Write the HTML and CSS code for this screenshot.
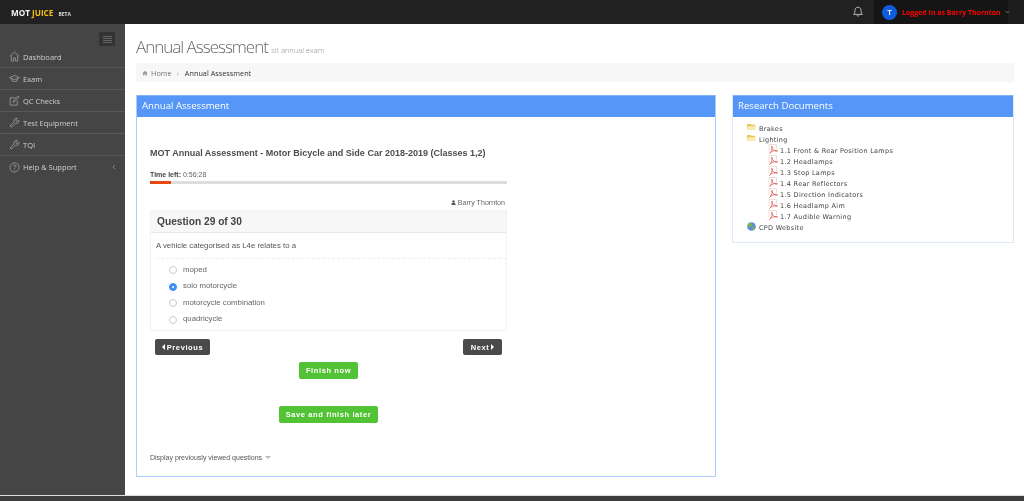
FILE: index.html
```html
<!DOCTYPE html>
<html lang="en">
<head>
<meta charset="utf-8">
<title>Annual Assessment</title>
<link rel="stylesheet" href="styles.css">
</head>
<body>
<header class="topbar">
  <div class="logo"><span class="logo-mot">MOT</span><span class="logo-juice">JUICE</span><span class="logo-beta">BETA</span></div>
  <svg class="bell" viewBox="0 0 12 12"><path d="M6 1.2c-2 0-3 1.500-3 3.200 0 2.600-1 3.400-1.400 4h8.800c-.4-.6-1.400-1.400-1.400-4 0-1.700-1-3.200-3-3.200zM5 9.500c.2.900 1.800.9 2 0"/></svg>
  <div class="user">
    <span class="avatar">T</span>
    <span class="user-name">Logged In as Barry Thornton</span>
    <svg class="user-caret" viewBox="0 0 6 4"><path d="M1 1l2 2 2-2"/></svg>
  </div>
</header>
<div class="layout">
  <aside class="sidebar">
    <div class="toggle-row"><div class="toggle"><i></i><i></i><i></i><i></i></div></div>
    <nav>
      <a class="nav-item"><svg viewBox="0 0 12 12"><path d="M.8 6L6 1.200 11.200 6M2.500 5v6h2.500V7.500h2V11h2.500V5"/></svg>Dashboard</a>
      <a class="nav-item"><svg viewBox="0 0 12 12"><path d="M.5 5L6 2.800 11.500 5 6 7.200zM3 6.200v2.300c1.500 1.100 4.500 1.100 6 0V6.200"/></svg>Exam</a>
      <a class="nav-item"><svg viewBox="0 0 12 12"><path d="M9 6.500V11H1.200V3H7M4.500 8l.4-1.800L10 1.200l1 1.300-5 5z"/></svg>QC Checks</a>
      <a class="nav-item"><svg viewBox="0 0 12 12"><path d="M1 9.800L5.500 5.300C4.800 3 6.800 1 9 1.500L7.500 3.200l.4 1.300 1.300.4 1.600-1.500c.5 2.300-1.500 4.200-3.700 3.500L2.300 11.100z"/></svg>Test Equipment</a>
      <a class="nav-item"><svg viewBox="0 0 12 12"><path d="M1 9.800L5.500 5.300C4.800 3 6.800 1 9 1.500L7.500 3.200l.4 1.300 1.300.4 1.600-1.500c.5 2.300-1.500 4.200-3.700 3.500L2.300 11.100z"/></svg>TQI</a>
      <a class="nav-item nav-last"><svg viewBox="0 0 12 12"><circle cx="6" cy="6" r="5"/><path d="M4.400 4.800C4.500 3 7.600 3 7.600 4.700 7.600 5.800 6 5.800 6 7.200M6 8.200v1"/></svg>Help &amp; Support<svg class="nav-caret" viewBox="0 0 4 6"><path d="M3 1L1 3l2 2"/></svg></a>
    </nav>
  </aside>
  <main class="main">
    <h1 class="page-title">Annual Assessment <small>sit annual exam</small></h1>
    <div class="breadcrumb">
      <svg class="crumb-home" viewBox="0 0 12 12"><path d="M6 1.500L.5 6.500h1.700V11h2.800V7.800h2V11h2.800V6.500h1.700z"/></svg>
      <span class="crumb-link">Home</span><span class="crumb-sep">›</span><span class="crumb-here">Annual Assessment</span>
    </div>
    <div class="columns">
      <section class="panel panel-exam">
        <h2 class="panel-head">Annual Assessment</h2>
        <div class="exam-body">
          <h3 class="exam-title">MOT Annual Assessment - Motor Bicycle and Side Car 2018-2019 (Classes 1,2)</h3>
          <div class="timer"><b>Time left:</b> 0:56:28</div>
          <div class="progress"><div class="progress-fill" style="width:6%"></div></div>
          <div class="candidate"><svg viewBox="0 0 10 10"><circle cx="5" cy="3" r="2.400"/><path d="M.8 10c0-3 1-4.500 4.200-4.500S9.200 7 9.200 10z"/></svg>Barry Thornton</div>
          <div class="question">
            <div class="question-head">Question 29 of 30</div>
            <p class="question-text">A vehicle categorised as L4e relates to a</p>
            <ul class="options">
              <li><span class="radio"></span>moped</li>
              <li><span class="radio radio-on"></span>solo motorcycle</li>
              <li><span class="radio"></span>motorcycle combination</li>
              <li><span class="radio"></span>quadricycle</li>
            </ul>
          </div>
          <div class="pager">
            <a class="btn btn-dark"><span class="tri tri-left"></span>Previous</a>
            <a class="btn btn-dark">Next<span class="tri tri-right"></span></a>
          </div>
          <div class="finish finish-now"><a class="btn btn-green btn-now">Finish now</a></div>
          <div class="finish finish-later"><a class="btn btn-green btn-later">Save and finish later</a></div>
          <div class="previous-toggle">Display previously viewed questions<span class="tri-down"></span></div>
        </div>
      </section>
      <section class="panel panel-docs">
        <h2 class="panel-head">Research Documents</h2>
        <ul class="tree">
          <li><svg class="ti" viewBox="0 0 10 10"><path fill="#e8c65a" d="M0 1h4l1 1h4v5.500H0z"/><path fill="#fbeeb0" d="M1 3.500h9l-1 4H0z"/></svg>Brakes</li>
          <li><svg class="ti" viewBox="0 0 10 10"><path fill="#e8c65a" d="M0 1h4l1 1h4v5.500H0z"/><path fill="#fbeeb0" d="M1 3.500h9l-1 4H0z"/></svg>Lighting</li>
          <li class="leaf"><svg class="ti ti-pdf" viewBox="0 0 10 10"><path class="pdf" d="M1.500 9.500c1-.5 3-4 2.800-6.500-.1-1.500-.9-1-.6.300C4 5 6.500 7.500 9 7.300c1-.1.600-1-.8-.9-2 .1-5 .9-6.700 3.100z"/><path class="pdf-page" d="M1 7V.5h7.500V5"/></svg>1.1 Front &amp; Rear Position Lamps</li>
          <li class="leaf"><svg class="ti ti-pdf" viewBox="0 0 10 10"><path class="pdf" d="M1.500 9.500c1-.5 3-4 2.800-6.500-.1-1.500-.9-1-.6.300C4 5 6.500 7.500 9 7.300c1-.1.600-1-.8-.9-2 .1-5 .9-6.700 3.100z"/><path class="pdf-page" d="M1 7V.5h7.500V5"/></svg>1.2 Headlamps</li>
          <li class="leaf"><svg class="ti ti-pdf" viewBox="0 0 10 10"><path class="pdf" d="M1.500 9.500c1-.5 3-4 2.800-6.500-.1-1.500-.9-1-.6.300C4 5 6.500 7.500 9 7.300c1-.1.600-1-.8-.9-2 .1-5 .9-6.700 3.100z"/><path class="pdf-page" d="M1 7V.5h7.500V5"/></svg>1.3 Stop Lamps</li>
          <li class="leaf"><svg class="ti ti-pdf" viewBox="0 0 10 10"><path class="pdf" d="M1.500 9.500c1-.5 3-4 2.800-6.500-.1-1.500-.9-1-.6.300C4 5 6.500 7.500 9 7.300c1-.1.600-1-.8-.9-2 .1-5 .9-6.700 3.100z"/><path class="pdf-page" d="M1 7V.5h7.500V5"/></svg>1.4 Rear Reflectors</li>
          <li class="leaf"><svg class="ti ti-pdf" viewBox="0 0 10 10"><path class="pdf" d="M1.500 9.500c1-.5 3-4 2.800-6.500-.1-1.500-.9-1-.6.300C4 5 6.500 7.500 9 7.300c1-.1.600-1-.8-.9-2 .1-5 .9-6.700 3.100z"/><path class="pdf-page" d="M1 7V.5h7.500V5"/></svg>1.5 Direction Indicators</li>
          <li class="leaf"><svg class="ti ti-pdf" viewBox="0 0 10 10"><path class="pdf" d="M1.500 9.500c1-.5 3-4 2.800-6.500-.1-1.500-.9-1-.6.300C4 5 6.500 7.500 9 7.300c1-.1.600-1-.8-.9-2 .1-5 .9-6.700 3.100z"/><path class="pdf-page" d="M1 7V.5h7.500V5"/></svg>1.6 Headlamp Aim</li>
          <li class="leaf"><svg class="ti ti-pdf" viewBox="0 0 10 10"><path class="pdf" d="M1.500 9.500c1-.5 3-4 2.800-6.500-.1-1.500-.9-1-.6.300C4 5 6.500 7.500 9 7.300c1-.1.600-1-.8-.9-2 .1-5 .9-6.700 3.100z"/><path class="pdf-page" d="M1 7V.5h7.500V5"/></svg>1.7 Audible Warning</li>
          <li><svg class="ti" viewBox="0 0 10 10"><circle cx="5" cy="5" r="4.800" fill="#5c8fd6"/><path fill="#7db54a" d="M3 1.200c1.500-.6 3.500 0 3 1.600S3.500 4 3.200 5.500 1 5.500.6 4C.8 3 1.800 1.800 3 1.200zM6.500 6c1-.5 2.500-.3 2.800 0-.2 1.300-1.500 3-3 3.300C5.800 8.500 5.800 6.800 6.500 6z"/></svg>CPD Website</li>
        </ul>
      </section>
    </div>
  </main>
</div>
<footer class="footer"></footer>
</body>
</html>
```
FILE: styles.css
```css
* { box-sizing: border-box; }
html, body { margin: 0; height: 501px; overflow: hidden; }
body { background: #454545; font-family: "Liberation Sans", Arial, sans-serif; color: #444; display: flex; flex-direction: column; filter: blur(.3px); }
svg { display: block; flex: none; }

/* top bar */
.topbar { height: 24px; flex: none; display: flex; align-items: center; background: #212121; padding-left: 11px; }
.logo { display: flex; align-items: baseline; font-family: "Open Sans", sans-serif; font-weight: 700; font-size: 8.200px; margin-right: auto; }
.logo-mot { color: #f2f2f2; margin-right: 2px; }
.logo-juice { color: #f6bd16; }
.logo-beta { color: #ddd; font-size: 5px; margin-left: 5px; }
.bell { width: 12px; height: 12px; fill: none; stroke: #b5b5b5; stroke-width: 1; margin-right: 10px; }
.user { width: 150px; height: 24px; background: #151515; display: flex; align-items: center; padding-left: 8px; border-right: 16px solid #1d1d1d; }
.avatar { width: 15px; height: 15px; flex: none; border-radius: 50%; background: #0f5ce0; color: #fff; font-size: 7.500px; font-weight: 700; display: flex; align-items: center; justify-content: center; margin-right: 5px; }
.user-name { color: #f00; font-family: "Open Sans", sans-serif; font-size: 7px; font-weight: 700; white-space: nowrap; }
.user-caret { width: 5px; height: 4px; margin-left: 4px; fill: none; stroke: #888; stroke-width: 1; }

/* layout */
.layout { flex: 1; display: flex; min-height: 0; }
.sidebar { width: 125px; flex: none; background: #454545; }
.toggle-row { display: flex; justify-content: flex-end; padding: 8px 10px 0 0; height: 22px; }
.toggle { width: 16px; height: 14px; background: #333; display: flex; flex-direction: column; justify-content: center; align-items: center; gap: 1px; }
.toggle i { display: block; width: 9px; height: 1px; background: #666; }
.nav-item { height: 22px; display: flex; align-items: center; padding-left: 9px; color: #cfcfcf; font-family: "Open Sans", sans-serif; font-size: 7.500px; border-bottom: 1px solid #595959; }
.nav-last { border-bottom: 0; }
.nav-item > svg:first-child { width: 11px; height: 11px; margin-right: 3px; fill: none; stroke: #a9a9a9; stroke-width: .8; }
.nav-caret { width: 4px; height: 6px; margin-left: auto; margin-right: 9px; fill: none; stroke: #999; stroke-width: .7; }

/* main */
.main { flex: 1; min-width: 0; background: #fff; padding: 0 10px 0 11px; }
.page-title { margin: 13px 0 0; height: 26px; font-family: "Open Sans", sans-serif; font-weight: 300; font-size: 17px; line-height: 20px; color: #666; letter-spacing: -1px; white-space: nowrap; }
.page-title small { font-size: 7.500px; font-weight: 300; color: #888; letter-spacing: 0; }
.breadcrumb { height: 19px; background: #f7f7f7; display: flex; align-items: center; padding-left: 6px; font-family: "Open Sans", sans-serif; font-size: 7.300px; }
.crumb-home { width: 6px; height: 6px; fill: #999; margin-right: 3px; }
.crumb-link { color: #777; }
.crumb-sep { color: #999; margin: 0 6px 0 5px; }
.crumb-here { color: #333; }
.columns { display: grid; grid-template-columns: 580px 282px; gap: 16px; margin-top: 13px; align-items: start; }
.panel { border: 1px solid #abcdfb; border-top: 0; background: #fff; }
.panel-head { margin: 0; height: 22px; background: #5596f6; color: #fff; border-top: 1px solid #84b2f8; font-family: "Open Sans", sans-serif; font-weight: 400; font-size: 9.600px; line-height: 20px; padding-left: 5px; }
.panel-exam { height: 382px; }
.panel-docs { height: 148px; border-color: #dbe8fd; }

/* exam */
.exam-body { padding: 0 9px 0 13px; }
.exam-title { margin: 30px 0 0; height: 12px; font-size: 9px; line-height: 12px; font-weight: 700; color: #4d4d4d; white-space: nowrap; }
.timer { margin-top: 11px; height: 9px; font-size: 7px; line-height: 9px; color: #666; white-space: nowrap; }
.timer b { color: #444; }
.progress { margin-top: 2px; width: 357px; height: 3px; background: #ddd; }
.progress-fill { height: 3px; background: #e5470c; }
.candidate { width: 355px; margin-top: 14px; height: 9px; display: flex; align-items: center; justify-content: flex-end; gap: 2px; font-size: 7.100px; color: #666; }
.candidate svg { width: 5px; height: 5px; fill: #555; }
.question { width: 357px; height: 121px; margin-top: 3px; border: 1px solid #f2f2f2; }
.question-head { height: 22px; background: #f7f7f7; border-bottom: 1px solid #e8e8e8; font-size: 10.200px; line-height: 21px; font-weight: 700; color: #444; padding-left: 6px; }
.question-text { margin: 0 0 0 5px; height: 26px; padding-top: 8px; font-size: 7.800px; line-height: 9px; color: #555; border-bottom: 1px dashed #eee; white-space: nowrap; }
.options { list-style: none; margin: 2px 0 0; padding: 0 0 0 18px; }
.options li { height: 16.500px; display: flex; align-items: center; font-size: 7.800px; color: #666; white-space: nowrap; }
.radio { width: 8px; height: 8px; border-radius: 50%; border: 1px solid #ccc; margin: 2px 6px 0 0; background: #fff; flex: none; }
.radio-on { background: #3f8ff5; border-color: #3f8ff5; }
.radio-on::after { content: ""; display: block; width: 2px; height: 2px; margin: 2px; background: #fff; border-radius: 50%; }
.btn { display: inline-flex; align-items: center; justify-content: center; font-size: 7.500px; font-weight: 700; color: #fff; letter-spacing: .6px; border-radius: 2px; white-space: nowrap; }
.btn-dark { height: 16px; background: #4a4a4a; padding: 0 6px; }
.btn-dark:first-child { width: 55px; }
.btn-dark:last-child { width: 39px; }
.btn-green { height: 17px; background: #51c334; }
.btn-now { width: 59px; }
.btn-later { width: 99px; }
.pager { width: 347px; margin: 8px 0 0 5px; display: flex; justify-content: space-between; }
.tri { width: 0; height: 0; border-style: solid; border-color: transparent; border-width: 3px 0; }
.tri-left { border-right: 3px solid #fff; margin-right: 2px; }
.tri-right { border-left: 3px solid #fff; margin-left: 2px; }
.finish { width: 357px; display: flex; justify-content: center; }
.finish-now { margin-top: 7px; }
.finish-later { margin-top: 27px; }
.previous-toggle { margin-top: 30px; height: 9px; display: flex; align-items: center; font-size: 7px; color: #555; white-space: nowrap; }
.tri-down { width: 0; height: 0; border: 3px solid transparent; border-top: 3px solid #bbb; border-bottom: 0; margin-left: 3px; }

/* tree */
.tree { list-style: none; margin: 0; padding: 6px 0 0 14px; font-family: "DejaVu Sans", Verdana, sans-serif; font-size: 6.500px; letter-spacing: .3px; color: #444; }
.tree li { height: 11px; display: flex; align-items: center; white-space: nowrap; }
.tree .leaf { padding-left: 21px; }
.ti { width: 9px; height: 9px; margin-right: 3px; margin-top: -3px; }
.ti-pdf { width: 10px; height: 10px; margin-right: 2px; }
.pdf { fill: none; stroke: #d8352c; stroke-width: .6; }
.pdf-page { fill: none; stroke: #d8bcb8; stroke-width: .5; }

.footer { height: 6px; flex: none; background: #3d3d3d; border-top: 1px solid #ddd; }
```
